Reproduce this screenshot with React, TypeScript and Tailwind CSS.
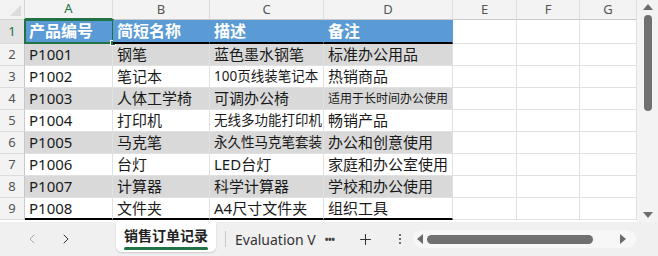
import { ChevronLeft, ChevronRight, Plus } from 'lucide-react';

const cols = ['A', 'B', 'C', 'D', 'E', 'F', 'G'];

type Cell = { text: string; small?: 'sm' | 'xs' };

const rows: Cell[][] = [
  [{ text: 'P1001' }, { text: '钢笔' }, { text: '蓝色墨水钢笔' }, { text: '标准办公用品' }],
  [{ text: 'P1002' }, { text: '笔记本' }, { text: '100页线装笔记本', small: 'sm' }, { text: '热销商品' }],
  [{ text: 'P1003' }, { text: '人体工学椅' }, { text: '可调办公椅' }, { text: '适用于长时间办公使用', small: 'xs' }],
  [{ text: 'P1004' }, { text: '打印机' }, { text: '无线多功能打印机', small: 'sm' }, { text: '畅销产品' }],
  [{ text: 'P1005' }, { text: '马克笔' }, { text: '永久性马克笔套装', small: 'sm' }, { text: '办公和创意使用' }],
  [{ text: 'P1006' }, { text: '台灯' }, { text: 'LED台灯' }, { text: '家庭和办公室使用' }],
  [{ text: 'P1007' }, { text: '计算器' }, { text: '科学计算器' }, { text: '学校和办公使用' }],
  [{ text: 'P1008' }, { text: '文件夹' }, { text: 'A4尺寸文件夹' }, { text: '组织工具' }],
];

const header = ['产品编号', '简短名称', '描述', '备注'];

const font = "font-['Segoe_UI','Noto_Sans','Noto_Sans_CJK_SC',sans-serif]";

export default function App() {
  return (
    <div className={`flex h-[256px] w-[658px] flex-col overflow-hidden bg-white ${font}`}>
      <div className="flex h-[222px]">
        <div className="grid w-[637px] grid-cols-[25px_88px_97px_114px_129px_64px_63px_57px] grid-rows-[20px_24px_repeat(8,22px)] content-start">
          {/* corner */}
          <div className="relative border-r border-b border-[#d4d4d4] bg-[#f3f3f3]">
            <div className="absolute right-[3px] bottom-[3px] h-0 w-0 border-b-[11px] border-l-[11px] border-b-[#dcdcdc] border-l-transparent" />
          </div>
          {cols.map((c) => (
            <div
              key={c}
              className={`flex items-center justify-center border-r border-[#dcdcdc] bg-[#f3f3f3] text-[13px] ${
                c === 'A'
                  ? 'border-b-2 border-b-[#217346] bg-[#e3e3e3] text-[#217346]'
                  : 'border-b border-b-[#c8c8c8] text-[#555]'
              }`}
            >
              {c}
            </div>
          ))}

          {/* row 1 */}
          <div className="flex items-center justify-center border-r border-b border-r-[#217346] border-b-[#dcdcdc] bg-[#e3e3e3] text-[13px] text-[#217346]">
            1
          </div>
          {header.map((h, i) => (
            <div
              key={h}
              className={`relative flex items-center border-b-2 border-b-black bg-[#5b9bd5] pl-[4px] text-[16px] font-bold text-white ${
                i === 0 ? '' : 'border-r border-r-[#5b9bd5]'
              }`}
            >
              {h}
              {i === 0 && (
                <>
                  <div className="pointer-events-none absolute -inset-x-px -top-px -bottom-[2px] border-2 border-[#217346]" />
                  <div className="absolute -right-[3px] -bottom-[4px] h-[6px] w-[6px] border border-white bg-[#217346]" />
                </>
              )}
            </div>
          ))}
          {[0, 1, 2].map((k) => (
            <div key={k} className="border-r border-b border-[#e1e1e1]" />
          ))}

          {rows.map((r, ri) => {
            const shaded = ri % 2 === 0;
            const last = ri === rows.length - 1;
            return (
              <div key={ri} className="contents">
                <div className="flex items-center justify-center border-r border-b border-r-[#c8c8c8] border-b-[#dcdcdc] bg-[#f3f3f3] text-[13px] text-[#555]">
                  {ri + 2}
                </div>
                {r.map((c, ci) => (
                  <div
                    key={ci}
                    className={`flex items-center overflow-hidden whitespace-nowrap pl-[4px] text-[#1a1a1a] ${
                      c.small === 'xs' ? 'text-[12px]' : c.small === 'sm' ? 'text-[13.5px]' : 'text-[15px]'
                    } ${shaded ? 'bg-[#d9d9d9]' : 'bg-white'} ${
                      last ? 'border-b-2 border-b-black' : 'border-b border-b-[#e1e1e1]'
                    } border-r border-r-[#e1e1e1]`}
                  >
                    {c.text}
                  </div>
                ))}
                {[0, 1, 2].map((k) => (
                  <div key={k} className="border-r border-b border-[#e1e1e1]" />
                ))}
              </div>
            );
          })}
        </div>

        {/* vertical scrollbar */}
        <div className="flex w-[21px] flex-col items-center bg-[#f3f3f3] pt-[4px] pb-[4px]">
          <div className="h-0 w-0 border-x-[5px] border-b-[6px] border-x-transparent border-b-[#6b6b6b]" />
          <div className="mt-[5px] h-[96px] w-[8px] rounded-full bg-[#707070]" />
          <div className="flex-1" />
          <div className="h-0 w-0 border-x-[5px] border-t-[6px] border-x-transparent border-t-[#6b6b6b]" />
        </div>
      </div>

      {/* sheet tab bar */}
      <div className="flex flex-1 items-center bg-[#f0f0f0] text-[#444]">
        <div className="ml-[24px] flex w-[80px] items-center gap-[18px]">
          <ChevronLeft className="h-[16px] w-[16px] text-[#a8a8a8]" strokeWidth={1.5} />
          <ChevronRight className="h-[16px] w-[16px] text-[#333]" strokeWidth={1.5} />
        </div>
        <div className="ml-[12px] flex h-[30px] flex-col items-center justify-center self-start rounded-b-[6px] bg-white px-[8px] shadow-[0_1px_2px_rgba(0,0,0,0.15)]">
          <span className="text-[14px] font-bold text-[#222]">销售订单记录</span>
          <div className="mt-[1px] h-[3px] w-[84px] rounded-full bg-[#217346]" />
        </div>
        <div className="mx-[9px] h-[16px] w-px bg-[#c8c8c8]" />
        <span className="text-[14px] whitespace-nowrap text-[#333]">Evaluation V</span>
        <span className="ml-[9px] text-[10px] font-bold tracking-[-0.5px] text-[#444]">•••</span>
        <Plus className="ml-[23px] h-[17px] w-[17px] text-[#333]" strokeWidth={1.5} />
        <div className="ml-[25px] flex flex-col items-center gap-[2px]">
          <div className="h-[2px] w-[2px] rounded-full bg-[#444]" />
          <div className="h-[2px] w-[2px] rounded-full bg-[#444]" />
          <div className="h-[2px] w-[2px] rounded-full bg-[#444]" />
        </div>
        <div className="ml-[12px] flex h-[18px] w-[223px] items-center rounded-full bg-[#f7f7f7] px-[4px]">
          <div className="h-0 w-0 border-y-[5px] border-r-[6px] border-y-transparent border-r-[#6b6b6b]" />
          <div className="ml-[4px] h-[9px] w-[166px] rounded-full bg-[#707070]" />
          <div className="flex-1" />
          <div className="mr-[6px] h-0 w-0 border-y-[5px] border-l-[6px] border-y-transparent border-l-[#6b6b6b]" />
        </div>
      </div>
    </div>
  );
}
